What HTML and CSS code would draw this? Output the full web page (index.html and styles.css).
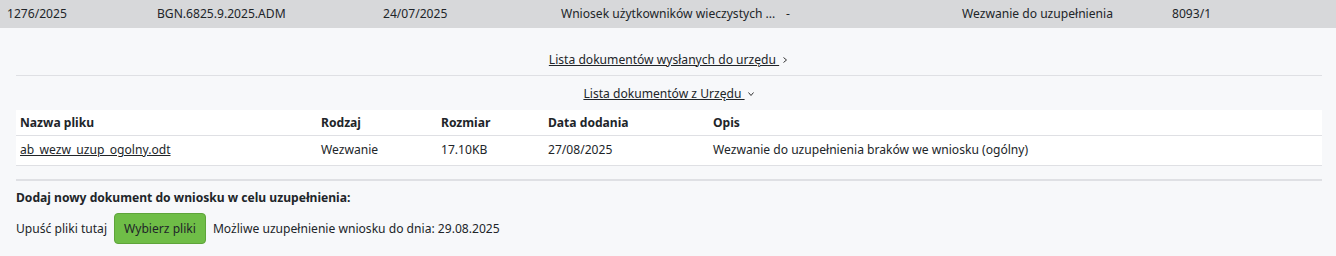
FILE: index.html
```html
<!DOCTYPE html>
<html>

<head>
    <meta charset="utf-8">
    <title>Wniosek 1276/2025</title>
    <link rel="stylesheet" href="styles.css">
</head>

<body>

    <div class="topbar">
        <span>1276/2025</span>
        <span>BGN.6825.9.2025.ADM</span>
        <span>24/07/2025</span>
        <span>Wniosek użytkowników wieczystych ...</span>
        <span>-</span>
        <span>Wezwanie do uzupełnienia</span>
        <span>8093/1</span>
    </div>

    <section class="details">
        <div class="toggle first">
            <a href="#">Lista dokumentów wysłanych do urzędu&nbsp;</a>
            <svg class="chev" width="8" height="8" viewBox="0 0 8 8"><path d="M2.5 1.5 L5.5 4 L2.5 6.5" fill="none" stroke="#333" stroke-width="1"/></svg>
        </div>
        <div class="toggle">
            <a href="#">Lista dokumentów z Urzędu&nbsp;</a>
            <svg class="chev" width="8" height="8" viewBox="0 0 8 8"><path d="M1.5 2.5 L4 5.5 L6.5 2.5" fill="none" stroke="#333" stroke-width="1"/></svg>
        </div>

        <table class="docs">
            <thead>
                <tr>
                    <th class="c1">Nazwa pliku</th>
                    <th class="c2">Rodzaj</th>
                    <th class="c3">Rozmiar</th>
                    <th class="c4">Data dodania</th>
                    <th>Opis</th>
                </tr>
            </thead>
            <tbody>
                <tr>
                    <td><a href="#">ab_wezw_uzup_ogolny.odt</a></td>
                    <td>Wezwanie</td>
                    <td>17.10KB</td>
                    <td>27/08/2025</td>
                    <td>Wezwanie do uzupełnienia braków we wniosku (ogólny)</td>
                </tr>
            </tbody>
        </table>

        <div class="upload">
            <p class="title">Dodaj nowy dokument do wniosku w celu uzupełnienia:</p>
            <div class="drop">
                <span>Upuść pliki tutaj</span>
                <button class="pick">Wybierz pliki</button>
                <span>Możliwe uzupełnienie wniosku do dnia: 29.08.2025</span>
            </div>
        </div>
    </section>

</body>

</html>
```

FILE: styles.css
```css
/* General styles */

html {
    background-color: #f7f8fa;
    font-family: "Noto Sans", "Open Sans", sans-serif;
    font-size: 12.1px;
    color: #212529;
}

body {
    margin: 0;
}

* {
    box-sizing: border-box;
}

a {
    color: #212529;
}

/* Top row */

.topbar {
    height: 28px;
    background-color: #d7d8da;
    display: grid;
    grid-template-columns: 150px 226px 178px 225px 176px 210px 1fr;
    align-items: center;
    padding-left: 7px;
    padding-bottom: 2px;
    white-space: nowrap;
}

/* Details */

.details {
    padding: 0 14px 0 16px;
}

.toggle {
    display: flex;
    justify-content: center;
    align-items: center;
    height: 34px;
}

.toggle.first {
    height: 48px;
    padding-top: 15px;
    border-bottom: 1px solid #dfe0e4;
}

.toggle .chev {
    margin-left: 2px;
    margin-top: 1px;
}

.docs {
    width: 100%;
    border-collapse: collapse;
    background-color: #fff;
}

.docs th {
    text-align: left;
    font-weight: bold;
    padding: 4px 4px 3px;
    height: 25px;
    border-bottom: 1px solid #dfe0e4;
}

.docs td {
    padding: 3px 4px 4px;
    height: 30px;
    border-bottom: 1px solid #dfe0e4;
}

.docs .c1 { width: 301px; }
.docs .c2 { width: 120px; }
.docs .c3 { width: 107px; }
.docs .c4 { width: 165px; }

/* Upload */

.upload {
    margin-top: 13px;
    border-top: 2px solid #dfe0e4;
}

.upload .title {
    margin: 0;
    padding-top: 8px;
    font-weight: bold;
}

.drop {
    display: flex;
    align-items: center;
    gap: 7px;
    margin-top: 7px;
}

.pick {
    font-family: inherit;
    font-size: 12.1px;
    color: #212529;
    background-color: #6fbd47;
    border: 1px solid #5ea43a;
    border-radius: 4px;
    padding: 5px 9px;
    height: 31px;
    cursor: pointer;
}
```
